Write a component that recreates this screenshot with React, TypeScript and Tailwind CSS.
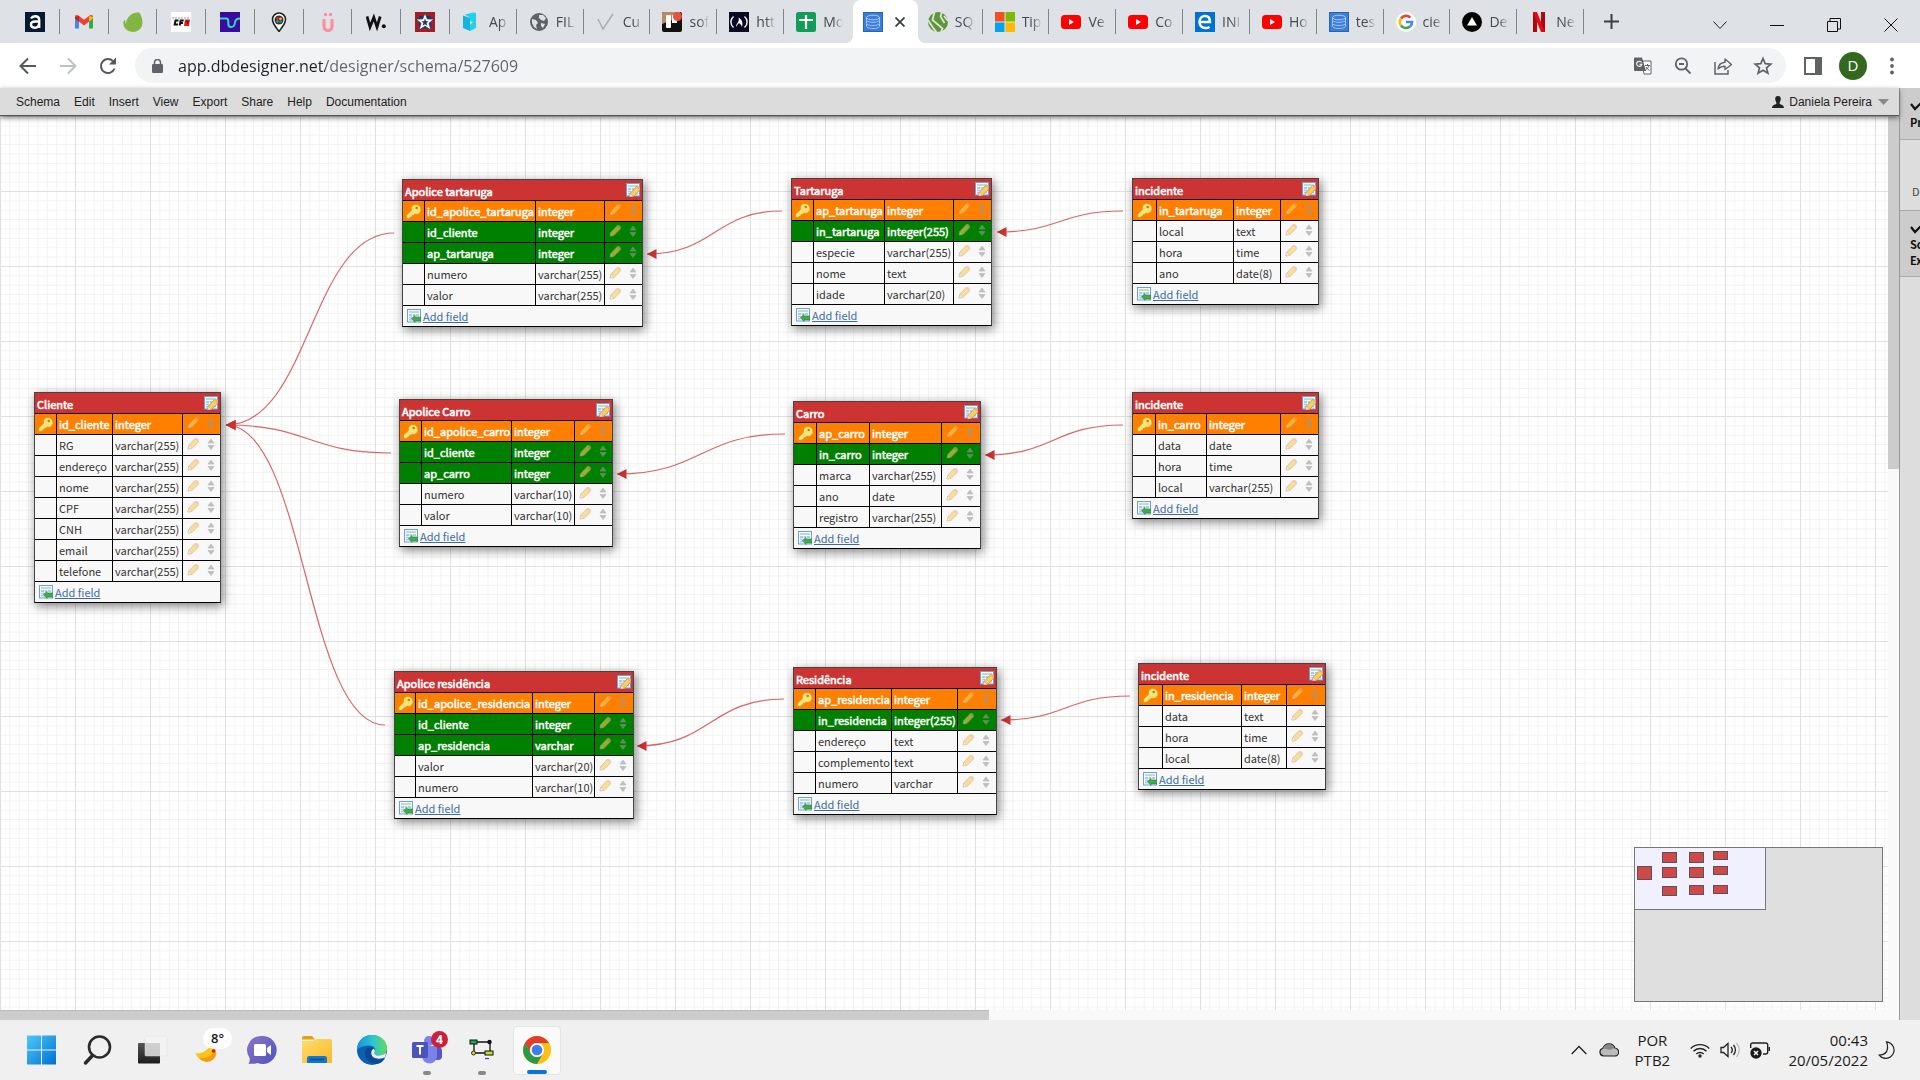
import React, { type ReactNode } from "react";

const uiFont = "font-['Open_Sans',sans-serif]";
const sheetFont = "font-['Noto_Sans_CJK_SC',sans-serif]";

/* ---------- Browser tabs ---------- */

const Fav = ({ children }: { children: ReactNode }) => (
  <svg viewBox="0 0 20 20" className="size-5 shrink-0" aria-hidden="true">
    {children}
  </svg>
);

const YouTube = () => (
  <Fav>
    <rect y="3" width="20" height="14" rx="3.5" fill="#f00" />
    <path d="M8 7v6l5-3z" fill="#fff" />
  </Fav>
);

const DbIcon = () => (
  <Fav>
    <rect x="0.5" y="0.5" width="19" height="19" fill="#3b7ddb" stroke="#2a62b0" />
    <g fill="none" stroke="#a9cbf7" strokeWidth="1">
      <ellipse cx="10" cy="5.5" rx="6.5" ry="2.3" />
      <path d="M3.5 5.5v2.5c0 1.300 3 2.300 6.500 2.300s6.500-1 6.500-2.300V5.500M3.500 9v2.200c0 1.300 3 2.300 6.500 2.300s6.500-1 6.500-2.300V9M3.500 12v2.200c0 1.300 3 2.300 6.500 2.300s6.500-1 6.500-2.300V12" />
    </g>
  </Fav>
);

const smallTabs: { name: string; icon: ReactNode }[] = [
  {
    name: "Alura",
    icon: (
      <Fav>
        <rect width="20" height="20" fill="#051933" />
        <path d="M6 6.500c1-1.700 2.300-2.200 4-2.200 2.700 0 4.200 1.300 4.200 3.900V16M14 9.500h-4c-2.600 0-4 1-4 3s1.300 3.200 3.500 3.200c2.400 0 4.500-1.300 4.500-4" fill="none" stroke="#fff" strokeWidth="2.400" />
      </Fav>
    ),
  },
  {
    name: "Gmail",
    icon: (
      <Fav>
        <path d="M1 4.500v12h4V8z" fill="#4285f4" />
        <path d="M19 4.500v12h-4V8z" fill="#34a853" />
        <path d="M1 5c0-2 2-2.500 3.500-1.400L10 7.800l5.500-4.200C17 2.500 19 3 19 5v1.500l-9 7-9-7z" fill="#ea4335" />
        <path d="M1 5v1.500l4 3.200V4z" fill="#c5221f" />
        <path d="M19 5v1.500l-4 3.200V4z" fill="#fbbc04" />
      </Fav>
    ),
  },
  {
    name: "Envato",
    icon: (
      <Fav>
        <path d="M16 .5c1.500 1 4.500 8 3 13-1.300 4.500-6 7-10.500 6.300C3 19 0 15 .4 10.500.6 9 1.500 7.500 2 8c.4 1 .2 2.500 1 4C3.500 5 9-.5 16 .500z" fill="#82b541" />
      </Fav>
    ),
  },
  {
    name: "CFB",
    icon: (
      <Fav>
        <rect width="20" height="20" fill="#fff" />
        <path d="M1 6h18" stroke="#999" strokeWidth="1" strokeDasharray="2 1" />
        <path d="M7.500 8.500H4.500L3.700 12.500H7M8.700 13.500l1-5h3M9.500 11h2.500" fill="none" stroke="#111" strokeWidth="2" />
        <path d="M14 7.500h5l-1 6.500h-5z" fill="#e01a1a" />
        <path d="M15.500 9.500h1.500l-.5 2.500" fill="none" stroke="#300" strokeWidth=".8" />
      </Fav>
    ),
  },
  {
    name: "Wave",
    icon: (
      <Fav>
        <rect width="20" height="20" fill="#3b0a9e" />
        <path d="M0 6.500h6.500q1.800 0 1.800 2.500v2.500q0 3.500 2.700 3.500 3.500 0 4-4.500.5-4 5-4" fill="none" stroke="#2fd8c5" strokeWidth="2" />
      </Fav>
    ),
  },
  {
    name: "Mapa",
    icon: (
      <Fav>
        <path d="M10 19.500C7 15 3.500 12 3.500 7.500a6.500 6.500 0 0 1 13 0C16.500 12 13 15 10 19.500z" fill="#fff" stroke="#222" strokeWidth="1.600" />
        <circle cx="10" cy="8" r="4.500" fill="#333" />
        <circle cx="8.500" cy="6.500" r="1.400" fill="#e23" />
        <circle cx="11.500" cy="6.800" r="1.400" fill="#fb0" />
        <circle cx="8.500" cy="9.500" r="1.400" fill="#2a5" />
        <circle cx="11.500" cy="9.700" r="1.400" fill="#27e" />
      </Fav>
    ),
  },
  {
    name: "U",
    icon: (
      <Fav>
        <path d="M6 7v7.500a4 4 0 0 0 8 0V7" fill="none" stroke="#ff8c9d" strokeWidth="3" />
        <circle cx="7.500" cy="2.500" r="1.700" fill="#ff8c9d" />
        <circle cx="12.500" cy="2.500" r="1.700" fill="#ff8c9d" />
      </Fav>
    ),
  },
  {
    name: "W",
    icon: (
      <Fav>
        <path d="M1 4.500l3 10.500 3.800-9.500L11 15l3.200-10.500" fill="none" stroke="#111" strokeWidth="2.800" />
        <circle cx="17.800" cy="14.300" r="2" fill="#111" />
      </Fav>
    ),
  },
  {
    name: "Estrela",
    icon: (
      <Fav>
        <rect width="20" height="20" fill="#a31d23" />
        <path d="M4 4h12v12H4z" fill="#1d3768" />
        <path d="M10 1l2.400 6H19l-5 4.300L16 18l-6-3.700L4 18l2-6.700L1 7h6.600z" fill="#fff" stroke="#1d3768" strokeWidth=".8" />
        <path d="M10 6.500l1 2.700h2.600l-2 1.800.8 2.700-2.400-1.500-2.400 1.500.8-2.700-2-1.800H9z" fill="#1d3768" />
      </Fav>
    ),
  },
];

const wideTabs: { title: string; icon: ReactNode; active?: boolean }[] = [
  {
    title: "Ap",
    icon: (
      <Fav>
        <path d="M1 3.500L8 6v13l-7-3z" fill="#12b5dd" />
        <path d="M3 2.500L11 .5 14 1v15l-6 3V6z" fill="#1fd0f2" />
        <path d="M8 9l3 1-3 3z" fill="#ffe14d" />
      </Fav>
    ),
  },
  {
    title: "FIL",
    icon: (
      <Fav>
        <circle cx="10" cy="10" r="9" fill="#5f6368" />
        <path d="M3 7l4 1 2 3-2 2 1 4-3-2-2-4zM10 3l4 0 3 3-2 3-3-1-2-2zM12 11l4 1-2 4-2-2z" fill="#dee1e6" />
      </Fav>
    ),
  },
  {
    title: "Cu",
    icon: (
      <Fav>
        <path d="M2 7l5 10L17 2" fill="none" stroke="#a9adb1" strokeWidth="1.500" />
      </Fav>
    ),
  },
  {
    title: "sof",
    icon: (
      <Fav>
        <rect width="20" height="20" rx="2" fill="#111" />
        <path d="M0 2a2 2 0 0 1 2-2h16v5L0 12z" fill="#b98a63" />
        <rect x="4" y="3" width="5" height="13" rx="1" fill="#fff" />
        <path d="M10 3h5v8h-5z" fill="#fff" />
        <circle cx="15.500" cy="4.500" r="4.500" fill="#e8503f" />
      </Fav>
    ),
  },
  {
    title: "htt",
    icon: (
      <Fav>
        <rect width="20" height="20" fill="#0a0a23" />
        <path d="M4.500 4.500c-3.500 3-3.500 8 0 11M15.500 4.500c3.500 3 3.500 8 0 11" fill="none" stroke="#fff" strokeWidth="1.400" />
        <path d="M7 15c0-4 4-5 2.500-9.500C13.500 8 14 11 13 15c-1-3-2-3-3-4-1 1-2 2-3 4z" fill="#fff" />
      </Fav>
    ),
  },
  {
    title: "Mo",
    icon: (
      <Fav>
        <rect width="20" height="20" rx="2.500" fill="#0f9d58" />
        <path d="M10 3v14M3 8h14" stroke="#fff" strokeWidth="2.200" />
      </Fav>
    ),
  },
  { title: "", icon: <DbIcon />, active: true },
  {
    title: "SQ",
    icon: (
      <Fav>
        <circle cx="10" cy="10" r="10" fill="#5e9732" />
        <path d="M6.500 0L4.500 8l10 8.500L13 20M14 0l-1.500 4.500 4 6.500M0 8l4.500 7 4 5M20 9l-4-5" fill="none" stroke="#dee1e6" strokeWidth="1.800" />
      </Fav>
    ),
  },
  {
    title: "Tip",
    icon: (
      <Fav>
        <path d="M0 0h9.500v9.500H0z" fill="#f25022" />
        <path d="M10.500 0H20v9.500h-9.500z" fill="#7fba00" />
        <path d="M0 10.500h9.500V20H0z" fill="#00a4ef" />
        <path d="M10.500 10.500H20V20h-9.500z" fill="#ffb900" />
      </Fav>
    ),
  },
  { title: "Ve", icon: <YouTube /> },
  { title: "Co", icon: <YouTube /> },
  {
    title: "INI",
    icon: (
      <Fav>
        <rect width="20" height="20" fill="#0072d6" />
        <path d="M4.500 10H15c0-4-2-6-5-6s-5.500 2.500-5.500 6 2.300 6 6 6c1.600 0 3-.4 4-1.100" fill="none" stroke="#fff" strokeWidth="2.500" />
      </Fav>
    ),
  },
  { title: "Ho", icon: <YouTube /> },
  { title: "tes", icon: <DbIcon /> },
  {
    title: "cie",
    icon: (
      <Fav>
        <circle cx="10" cy="10" r="10" fill="#fff" />
        <g fill="none" strokeWidth="2.600">
          <path d="M5 6.400A6.100 6.100 0 0 1 14.300 5.700" stroke="#ea4335" />
          <path d="M5 13.500a6.100 6.100 0 0 1 0-7" stroke="#fbbc05" />
          <path d="M14 14.600a6.100 6.100 0 0 1-9-1.200" stroke="#34a853" />
          <path d="M10 10h6.100c0 2-.8 3.600-2.100 4.600" stroke="#4285f4" />
        </g>
      </Fav>
    ),
  },
  {
    title: "De",
    icon: (
      <Fav>
        <circle cx="10" cy="10" r="10" fill="#000" />
        <path d="M10 5l5 8.500H5z" fill="#fff" />
      </Fav>
    ),
  },
  {
    title: "Ne",
    icon: (
      <Fav>
        <path d="M4 0h4v20l-4 .500zM12 0h4v20.500l-4-.5z" fill="#b1060f" />
        <path d="M4 0h4l8 20.500-4-.5z" fill="#e50914" />
      </Fav>
    ),
  },
];

const iconBtn = "flex shrink-0 items-center justify-center text-[#5f6368]";

const TabStrip = () => (
  <div className={`flex h-[43px] items-end bg-[#dee1e6] pl-[11px] text-[14px] text-[#45494d] ${uiFont}`}>
    <div className="flex h-full w-[439px]">
      {smallTabs.map((t) => (
        <button key={t.name} aria-label={t.name} className="flex flex-1 items-center pl-[14px]">
          {t.icon}
          <span className="ml-auto h-[25px] w-px bg-[#80868b]" />
        </button>
      ))}
    </div>
    <div className="flex h-full w-[1134px]">
      {wideTabs.map((t, i) =>
        t.active ? (
          <div key={i} className="relative ml-[2px] flex flex-1 items-center rounded-t-lg bg-white pl-[10px]">
            <span className="absolute bottom-0 -left-2 size-2 bg-[radial-gradient(circle_at_0_0,transparent_8px,white_8px)]" />
            <span className="absolute -right-2 bottom-0 size-2 bg-[radial-gradient(circle_at_100%_0,transparent_8px,white_8px)]" />
            <button aria-label="DB Designer">{t.icon}</button>
            <button aria-label="Fechar aba" className="ml-3">
              <svg viewBox="0 0 10 10" className="size-[10px]">
                <path d="M.5.5l9 9M9.500.5l-9 9" stroke="#3c4043" strokeWidth="1.800" />
              </svg>
            </button>
          </div>
        ) : (
          <button key={i} className={`flex flex-1 items-center ${i === 7 ? "pl-[10px]" : "pl-[12px]"}`}>
            {t.icon}
            <span className="ml-[7px] w-5 overflow-hidden text-left leading-5 whitespace-nowrap [mask-image:linear-gradient(90deg,black_50%,transparent)]">
              {t.title}
            </span>
            <span className={`ml-auto h-[25px] w-px ${i === 5 ? "bg-transparent" : "bg-[#80868b]"}`} />
          </button>
        ),
      )}
    </div>
    <button aria-label="Nova aba" className="ml-5 flex h-full items-center">
      <svg viewBox="0 0 15 15" className="size-[15px]">
        <path d="M7.500 0v15M0 7.500h15" stroke="#3c4043" strokeWidth="2" />
      </svg>
    </button>
    <div className="ml-auto flex h-[36px] items-center gap-[43px] pr-[22px]">
      <button aria-label="Pesquisar abas">
        <svg viewBox="0 0 14 14" className="size-[14px]"><path d="M.5 3.500L7 10.500l6.500-7" fill="none" stroke="#222" /></svg>
      </button>
      <button aria-label="Minimizar">
        <svg viewBox="0 0 14 14" className="size-[14px]"><path d="M0 7.500h14" stroke="#111" /></svg>
      </button>
      <button aria-label="Restaurar">
        <svg viewBox="0 0 14 14" className="size-[14px]">
          <path d="M.5 3.500h10v10H.5zM3 3.500V.500h10.500v10.500H10.500" fill="none" stroke="#111" />
        </svg>
      </button>
      <button aria-label="Fechar">
        <svg viewBox="0 0 14 14" className="size-[14px]"><path d="M.5.500l13 13M13.500.500l-13 13" stroke="#111" /></svg>
      </button>
    </div>
  </div>
);

const AddressBar = () => (
  <div className={`flex h-[45px] items-center bg-white pr-[20px] pl-[18px] ${uiFont}`}>
    <button aria-label="Voltar" className={`${iconBtn} size-5`}>
      <svg viewBox="0 0 20 20" className="size-5"><path d="M18 10H3M10 2.500L2.500 10l7.500 7.500" fill="none" stroke="#55595d" strokeWidth="2" /></svg>
    </button>
    <button aria-label="Avançar" className={`${iconBtn} ml-5 size-5`}>
      <svg viewBox="0 0 20 20" className="size-5"><path d="M2 10h15M10 2.500l7.500 7.500-7.500 7.500" fill="none" stroke="#bdc1c6" strokeWidth="2" /></svg>
    </button>
    <button aria-label="Recarregar" className={`${iconBtn} ml-5 size-5`}>
      <svg viewBox="0 0 20 20" className="size-5">
        <path d="M16.500 12.500A7 7 0 1 1 15 5.200" fill="none" stroke="#55595d" strokeWidth="2" />
        <path d="M18 1.500v7h-7z" fill="#55595d" />
      </svg>
    </button>
    <form className="ml-[17px] flex h-[35px] flex-1 items-center rounded-full bg-[#f1f3f4] pr-[13px] pl-[17px]" onSubmit={(e) => e.preventDefault()}>
      <svg viewBox="0 0 11 14" className="h-[14px] w-[11px] shrink-0" aria-hidden="true">
        <rect y="5" width="11" height="9" rx="1.200" fill="#5f6368" />
        <path d="M2.500 6V3.500a3 3 0 0 1 6 0V6" fill="none" stroke="#5f6368" strokeWidth="1.500" />
      </svg>
      <input
        aria-label="Barra de endereço"
        defaultValue="app.dbdesigner.net/designer/schema/527609"
        className="ml-[15px] h-[30px] min-w-0 flex-1 bg-[linear-gradient(90deg,#202124_147px,#5f6368_147px)] bg-clip-text text-[16px] text-[#202124] outline-none [-webkit-text-fill-color:transparent]"
      />
      <div className="flex items-center gap-5">
        <button aria-label="Traduzir" type="button" className={iconBtn}>
          <svg viewBox="0 0 20 20" className="size-5">
            <path d="M9 5h9v13h-7z" fill="#fff" stroke="#5f6368" />
            <path d="M2 1.500h7l4 13.500H2a1 1 0 0 1-1-1V2.500a1 1 0 0 1 1-1z" fill="#5f6368" />
            <path d="M8.500 6.500A2.600 2.600 0 1 0 8.800 8.300H6.500" fill="none" stroke="#fff" strokeWidth="1.100" />
            <path d="M12 9.500h5M14.500 8v1.500M16 9.500c-.5 2-2 3.500-3.500 4.500M13 11c.7 1.500 2 2.800 3.500 3.500" fill="none" stroke="#5f6368" />
          </svg>
        </button>
        <button aria-label="Zoom" type="button" className={iconBtn}>
          <svg viewBox="0 0 20 20" className="size-5">
            <circle cx="8.500" cy="8" r="5.700" fill="none" stroke="#5f6368" strokeWidth="1.800" />
            <path d="M12.500 12.500l5 5M6 8h5" stroke="#5f6368" strokeWidth="1.800" />
          </svg>
        </button>
        <button aria-label="Compartilhar" type="button" className={iconBtn}>
          <svg viewBox="0 0 20 20" className="size-5">
            <path d="M2 6v12h13v-4" fill="none" stroke="#5f6368" strokeWidth="1.500" />
            <path d="M5 13c.5-4 3-6.500 7-6.800V3l6.500 5.500L12 13.500v-3.200c-3 0-5 .7-7 2.700z" fill="none" stroke="#5f6368" strokeWidth="1.400" strokeLinejoin="round" />
          </svg>
        </button>
        <button aria-label="Favoritos" type="button" className={iconBtn}>
          <svg viewBox="0 0 20 20" className="size-5">
            <path d="M10 2.500l2.200 5.200 5.600.4-4.300 3.700 1.400 5.500L10 14.300l-4.900 3 1.400-5.500L2.200 8.100l5.600-.4z" fill="none" stroke="#5f6368" strokeWidth="1.700" />
          </svg>
        </button>
      </div>
    </form>
    <button aria-label="Painel lateral" className={`${iconBtn} ml-[18px]`}>
      <svg viewBox="0 0 18 18" className="size-[18px]">
        <rect x="1" y="1" width="16" height="16" fill="#fff" stroke="#5f6368" strokeWidth="2" />
        <path d="M11 1h6v16h-6z" fill="#5f6368" />
      </svg>
    </button>
    <button aria-label="Perfil" className="ml-[17px] flex size-7 items-center justify-center rounded-full bg-[#33691e] text-[15px] leading-none text-white">
      D
    </button>
    <button aria-label="Menu" className={`${iconBtn} ml-[17px] w-4`}>
      <svg viewBox="0 0 4 18" className="h-[18px] w-1"><g fill="#5f6368"><circle cx="2" cy="2.500" r="1.900" /><circle cx="2" cy="9" r="1.900" /><circle cx="2" cy="15.500" r="1.900" /></g></svg>
    </button>
  </div>
);

const menu = ["Schema", "Edit", "Insert", "View", "Export", "Share", "Help", "Documentation"];

const MenuBar = () => (
  <nav className="relative z-20 flex h-7 items-center border-b border-[#555] bg-[#dcdcdc] pr-2.5 pl-4 font-['Liberation_Sans',sans-serif] text-[12px] text-[#222] shadow-[0_2px_5px_rgba(0,0,0,0.5)]">
    <div className="flex gap-[14px]">
      {menu.map((m) => (
        <button key={m}>{m}</button>
      ))}
    </div>
    <button className="ml-auto flex items-center">
      <svg viewBox="0 0 12 12" className="mr-[5px] size-3" aria-hidden="true">
        <path d="M6 0c2 0 2.800 1.300 2.800 3S7.500 6.300 7.500 7.500c0 1 4.500 1 4.500 4.500H0c0-3.500 4.500-3.500 4.500-4.500C4.500 6.300 3.200 4.700 3.200 3S4 0 6 0z" fill="#222" />
      </svg>
      Daniela Pereira
      <svg viewBox="0 0 11 6" className="ml-[6px] h-[6px] w-[11px]" aria-hidden="true"><path d="M0 0h11L5.500 6z" fill="#888" /></svg>
    </button>
  </nav>
);

/* ---------- Schema tables ---------- */

type Field = [name: string, type: string];
type Entity = {
  title: string;
  x: number;
  y: number;
  cols: [number, number, number, number];
  keys: number;
  fields: Field[];
};

const entities: Entity[] = [
  {
    title: "Cliente", x: 34, y: 276, cols: [21, 56, 70, 38], keys: 0,
    fields: [["id_cliente", "integer"], ["RG", "varchar(255)"], ["endereço", "varchar(255)"], ["nome", "varchar(255)"], ["CPF", "varchar(255)"], ["CNH", "varchar(255)"], ["email", "varchar(255)"], ["telefone", "varchar(255)"]],
  },
  {
    title: "Apolice tartaruga", x: 402, y: 63, cols: [21, 111, 69, 38], keys: 2,
    fields: [["id_apolice_tartaruga", "integer"], ["id_cliente", "integer"], ["ap_tartaruga", "integer"], ["numero", "varchar(255)"], ["valor", "varchar(255)"]],
  },
  {
    title: "Tartaruga", x: 791, y: 62, cols: [21, 71, 69, 38], keys: 1,
    fields: [["ap_tartaruga", "integer"], ["in_tartaruga", "integer(255)"], ["especie", "varchar(255)"], ["nome", "text"], ["idade", "varchar(20)"]],
  },
  {
    title: "incidente", x: 1132, y: 62, cols: [23, 77, 47, 38], keys: 0,
    fields: [["in_tartaruga", "integer"], ["local", "text"], ["hora", "time"], ["ano", "date(8)"]],
  },
  {
    title: "Apolice Carro", x: 399, y: 283, cols: [21, 90, 63, 38], keys: 2,
    fields: [["id_apolice_carro", "integer"], ["id_cliente", "integer"], ["ap_carro", "integer"], ["numero", "varchar(10)"], ["valor", "varchar(10)"]],
  },
  {
    title: "Carro", x: 793, y: 285, cols: [22, 53, 72, 39], keys: 1,
    fields: [["ap_carro", "integer"], ["in_carro", "integer"], ["marca", "varchar(255)"], ["ano", "date"], ["registro", "varchar(255)"]],
  },
  {
    title: "incidente", x: 1132, y: 276, cols: [22, 51, 74, 38], keys: 0,
    fields: [["in_carro", "integer"], ["data", "date"], ["hora", "time"], ["local", "varchar(255)"]],
  },
  {
    title: "Apolice residência", x: 394, y: 555, cols: [20, 117, 62, 39], keys: 2,
    fields: [["id_apolice_residencia", "integer"], ["id_cliente", "integer"], ["ap_residencia", "varchar"], ["valor", "varchar(20)"], ["numero", "varchar(10)"]],
  },
  {
    title: "Residência", x: 793, y: 551, cols: [21, 76, 66, 39], keys: 1,
    fields: [["ap_residencia", "integer"], ["in_residencia", "integer(255)"], ["endereço", "text"], ["complemento", "text"], ["numero", "varchar"]],
  },
  {
    title: "incidente", x: 1138, y: 547, cols: [23, 79, 45, 39], keys: 0,
    fields: [["in_residencia", "integer"], ["data", "text"], ["hora", "time"], ["local", "date(8)"]],
  },
];

const Pencil = () => (
  <>
    <path d="M1 12l.8-3.800L8.200 1.400l3.400 3.400L5 11.400z" fill="#f7cf5e" stroke="#c0873a" strokeWidth=".7" />
    <path d="M1 12l.8-3.800 3.200 3.200z" fill="#f6e3cd" stroke="#a98a6c" strokeWidth=".4" />
    <path d="M8.200 1.400c1.700-1.500 4.900 1.700 3.400 3.400z" fill="#eba99c" />
  </>
);

const SheetIcon = ({ children }: { children: ReactNode }) => (
  <svg viewBox="0 0 14 14" className="size-[14px] shrink-0" aria-hidden="true">
    <rect x=".5" y=".5" width="13" height="12.500" fill="#f4f9ff" stroke="#6f9fd6" />
    <path d="M2 3h10" stroke="#86c08a" strokeWidth="1" />
    <path d="M2 5h10v6.500H2z" fill="#a9caee" />
    <path d="M2 7.500h10M2 9.500h10M5.500 5v6.500M8.500 5v6.500" stroke="#fff" strokeWidth=".6" />
    {children}
  </svg>
);

const KeyIcon = () => (
  <svg viewBox="0 0 14 14" className="mx-auto size-[15px]" aria-hidden="true">
    <path d="M8.800.5a4.700 4.700 0 0 1 4 7.800c-1.200 1.300-3 1.600-4.500 1.100L7.300 10.400l-1.500.2-.2 1.400-1.500.2-.3 1.200H.5v-2.900l4.700-4.600C4.500 3.200 6 .7 8.800.5z" fill="#fbe37a" stroke="#c99a1c" strokeWidth=".7" />
    <circle cx="10" cy="3.800" r="1.200" fill="#b98312" />
  </svg>
);

const EntityCard = ({ e }: { e: Entity }) => (
  <section
    className="absolute border border-[#444] border-b-black bg-[#f8f8f8] text-[11px] leading-[20px] text-[#333] shadow-[2px_3px_10px_rgba(0,0,0,0.5)]"
    style={{ left: e.x, top: e.y }}
  >
    <header className="flex h-5 items-center justify-between bg-[#cc3333] pr-[2px] pl-[2px] text-white">
      <h2 className="pt-px [-webkit-text-stroke:0.6px_white]">{e.title}</h2>
      <button aria-label="Editar tabela">
        <SheetIcon>
          <g transform="translate(2.500 2)"><Pencil /></g>
        </SheetIcon>
      </button>
    </header>
    <table className="table-fixed border-separate border-spacing-0" style={{ width: e.cols.reduce((a, b) => a + b, 0) }}>
      <colgroup>
        {e.cols.map((w, i) => (
          <col key={i} style={{ width: w }} />
        ))}
      </colgroup>
      <tbody>
        {e.fields.map(([name, type], i) => {
          const tone =
            i === 0
              ? "bg-[#ff8000] text-white [-webkit-text-stroke:0.5px_white]"
              : i <= e.keys
                ? "bg-[#008000] text-white [-webkit-text-stroke:0.5px_white]"
                : "";
          return (
            <tr key={i} className={tone}>
              <td className="h-[21px] border-t border-black p-0">{i === 0 && <KeyIcon />}</td>
              <td className="border-t border-l border-black p-0 pl-[2px] whitespace-nowrap">{name}</td>
              <td className="border-t border-l border-black p-0 pl-[2px] whitespace-nowrap">{type}</td>
              <td className="border-t border-l border-black p-0">
                <div className="flex h-5 items-start gap-[7px] pt-[2px] pl-[4px] opacity-60">
                  <button aria-label={`Editar ${name}`}>
                    <svg viewBox="0 0 13 13" className="size-[13px]"><Pencil /></svg>
                  </button>
                  <button aria-label={`Mover ${name}`}>
                    <svg viewBox="0 0 8 12" className="mt-px h-3 w-2"><path d="M1 5l3-4 3 4zM1 7.500h6l-3 4z" fill="#999" stroke="#999" strokeLinejoin="round" strokeWidth=".8" /></svg>
                  </button>
                </div>
              </td>
            </tr>
          );
        })}
      </tbody>
    </table>
    <footer className="flex h-[21px] items-center border-t border-black pl-[4px]">
      <SheetIcon>
        <path d="M4.500 9.500l3.500-3v1.500h6v4H8v1.500z" fill="#3fae49" stroke="#237a2b" strokeWidth=".5" />
      </SheetIcon>
      <a href="#add-field" className="ml-[2px] text-[#3a6ea5] underline">Add field</a>
    </footer>
  </section>
);

/* Each link runs from the arrow tip (x1, y1) to the referencing table (x2, y2). */
const links: [number, number, number, number][] = [
  [226, 309, 394, 117],
  [226, 309, 391, 337],
  [226, 309, 385, 609],
  [647, 138, 782, 95],
  [997, 116, 1123, 95],
  [617, 358, 785, 318],
  [985, 339, 1123, 309],
  [637, 630, 784, 583],
  [1001, 604, 1130, 580],
];

const miniBoxes: [number, number, number, number][] = [
  [2, 18, 15, 14],
  [27, 4, 15, 11], [54, 4, 15, 11], [78, 3, 15, 9],
  [27, 19, 15, 11], [54, 19, 15, 11], [78, 18, 15, 9],
  [27, 38, 15, 10], [54, 37, 15, 10], [78, 37, 15, 9],
];

const Canvas = () => (
  <main className="relative min-w-0 flex-1 overflow-hidden bg-white bg-[linear-gradient(90deg,#e0e0e0_1px,transparent_1px),linear-gradient(#e0e0e0_1px,transparent_1px),linear-gradient(90deg,#f2f2f2_1px,transparent_1px),linear-gradient(#f2f2f2_1px,transparent_1px)] bg-[length:75px_75px,75px_75px,9.375px_9.375px,9.375px_9.375px]">
    <svg className="absolute inset-0 size-full" aria-hidden="true">
      {links.map(([x1, y1, x2, y2], i) => {
        const m = (x1 + x2) / 2;
        return (
          <g key={i}>
            <path d={`M${x1} ${y1}C${m} ${y1} ${m} ${y2} ${x2} ${y2}`} fill="none" stroke="#cc3333" strokeOpacity=".75" strokeWidth="1.200" />
            <path d={`M${x1} ${y1}l9.500 -5v10z`} fill="#cc3333" />
          </g>
        );
      })}
    </svg>
    {entities.map((e, i) => (
      <EntityCard key={i} e={e} />
    ))}
    <div className="absolute right-[5px] bottom-[8px] h-[155px] w-[249px] border border-[#777] bg-[#ddd]/95">
      <div className="absolute -top-px -left-px h-[63px] w-[132px] border border-[#777] bg-[#f0f0ff]">
        {miniBoxes.map(([left, top, width, height], i) => (
          <span key={i} className="absolute border border-[#555] bg-[#d14848]" style={{ left, top, width, height }} />
        ))}
      </div>
    </div>
  </main>
);

const Check = () => (
  <svg viewBox="0 0 12 10" className="h-[10px] w-3" aria-hidden="true"><path d="M1 2l4 5 6-6" fill="none" stroke="#111" strokeWidth="2.200" /></svg>
);

const SidePanel = () => (
  <aside className={`w-[21px] shrink-0 overflow-hidden border-l border-[#999] bg-[#ddd] text-[11px] leading-[16px] text-[#111] ${sheetFont}`}>
    <button className="flex h-[52px] w-full flex-col items-start overflow-hidden border-b border-[#aaa] bg-[#ccc] pt-[14px] pl-[10px] text-left font-bold">
      <Check />
      <span className="mt-[2px]">Pr</span>
    </button>
    <div className="flex h-[71px] items-end border-b border-[#aaa] pb-[11px] pl-[12px] text-[#444]">D</div>
    <button className="flex h-[66px] w-full flex-col items-start overflow-hidden border-b border-[#aaa] bg-[#ccc] pt-[14px] pl-[10px] text-left font-bold">
      <Check />
      <span className="mt-px">Sc</span>
      <span>Ex</span>
    </button>
  </aside>
);

/* ---------- Taskbar ---------- */

const Task = ({ label, mark, children }: { label: string; mark?: "idle"; children: ReactNode }) => (
  <button aria-label={label} className="relative flex h-[50px] w-[55px] items-center justify-center">
    <svg viewBox="0 0 40 34" className="h-[34px] w-10">{children}</svg>
    {mark && <span className="absolute bottom-0 h-1 w-2 rounded-full bg-[#888]" />}
  </button>
);

const Taskbar = () => (
  <footer className={`flex h-[60px] shrink-0 items-center bg-[#f0f0f0] pr-6 pl-[14px] text-[#1b1b1b] ${uiFont}`}>
    <Task label="Iniciar">
      <defs>
        <linearGradient id="win" x1="0" y1="0" x2="1" y2="1"><stop stopColor="#4cc9fb" /><stop offset="1" stopColor="#0070d0" /></linearGradient>
        <linearGradient id="dk" x1="0" y1="0" x2="0" y2="1"><stop stopColor="#555" /><stop offset="1" stopColor="#1c1c1c" /></linearGradient>
        <linearGradient id="fold" x1="0" y1="0" x2="1" y2="1"><stop stopColor="#ffdc6b" /><stop offset="1" stopColor="#fbb92a" /></linearGradient>
        <linearGradient id="edge" x1="0" y1="0" x2="1" y2="0"><stop stopColor="#1b8fdc" /><stop offset=".5" stopColor="#2cc3d6" /><stop offset="1" stopColor="#62dc5a" /></linearGradient>
        <linearGradient id="chat" x1="0" y1="0" x2="1" y2="1"><stop stopColor="#8f74c8" /><stop offset="1" stopColor="#4b53bc" /></linearGradient>
      </defs>
      <path d="M5 2.500h14v14H5zM20 2.500h14v14H20zM5 17.500h14v14H5zM20 17.500h14v14H20z" fill="url(#win)" />
    </Task>
    <Task label="Pesquisar">
      <circle cx="22.500" cy="14" r="10.500" fill="none" stroke="#2b2b2b" strokeWidth="2.600" />
      <path d="M15.500 22.500L8.500 30" stroke="#2b2b2b" strokeWidth="3.500" strokeLinecap="round" />
    </Task>
    <Task label="Visão de tarefas">
      <rect x="6" y="10" width="22" height="20.500" rx="1" fill="url(#dk)" />
      <rect x="13" y="3" width="22" height="20" rx="1" fill="#f4f4f4" fillOpacity=".78" stroke="#ddd" strokeWidth=".5" />
    </Task>
    <button aria-label="Clima 8°" className="relative flex h-[50px] w-[55px] items-center justify-center">
      <svg viewBox="0 0 40 34" className="h-[34px] w-10">
        <path d="M8.500 20c5 1.500 12-2 15.500-8 6 3.500 7 10 3 13.500-6 5-15.500 3-18.500-5.500z" fill="#f9c516" />
        <path d="M12 24.500c6 2 13-1 16.500-8 1 8-2 10.500-6 12-4 1.200-8.500-.5-10.500-4z" fill="#f29a13" />
        <circle cx="26.500" cy="18" r="1.800" fill="#e0123a" />
      </svg>
      <span className="absolute top-[3px] right-[2px] flex h-[21px] w-[29px] items-center justify-center rounded-full bg-white/90 text-[13px] font-semibold">8°</span>
    </button>
    <Task label="Bate-papo">
      <path d="M20 3a14 14 0 1 1-4.500 27c-3 1-6 1-9 .7 1.300-2 1.500-3.800 1-6A14 14 0 0 1 20 3z" fill="url(#chat)" />
      <rect x="12" y="11" width="12" height="12" rx="1.500" fill="#fff" />
      <path d="M25 15l4-3v10l-4-3z" fill="#fff" />
    </Task>
    <Task label="Explorador de arquivos">
      <path d="M5 5a2 2 0 0 1 2-2h8l3 3.500h-13z" fill="#e2a113" />
      <path d="M5 8h11l3-2h14a2 2 0 0 1 2 2v22H5z" fill="url(#fold)" />
      <path d="M10 30v-4.500a2.500 2.500 0 0 1 2.500-2.500h15a2.500 2.500 0 0 1 2.500 2.500V30z" fill="#1177cf" />
      <path d="M13 26.500h14" stroke="#0b4d8c" strokeWidth="1.500" />
    </Task>
    <Task label="Edge">
      <circle cx="20" cy="17" r="15" fill="#0f5fb0" />
      <path d="M5 17C5 8 11 2 20 2c9 0 15 6 15 13 0 5-4 7.500-8.500 7.500-4 0-5-2-3.500-4 1-2-.5-6-6-6S6 15 5 17z" fill="url(#edge)" />
      <path d="M13.500 17c-2 6 2 13 10 14 4 .3 7-2 10-6-5 3-13 2-14-4-.5-3 1-5 2-5.500-3-2-7-.5-8 1.500z" fill="#0a4a93" />
      <path d="M23 18.500c-1.500 2-.5 4 3.500 4 3 0 6-1 7.600-3l-.8 4.500c-5 3-13.500 2-14-3.500-.2-2 .8-4 2.200-4.700.9.700 1.500 2 1.500 2.700z" fill="#f0f0f0" />
    </Task>
    <div className="relative">
      <Task label="Teams" mark="idle">
        <circle cx="22" cy="8" r="5" fill="#7b83eb" />
        <rect x="24" y="14" width="11" height="13" rx="4" fill="#5059c9" />
        <path d="M15 13h15v10a7.500 7.500 0 0 1-15 0z" fill="#7b83eb" />
        <rect x="5" y="9" width="16" height="16" rx="1.500" fill="#4b53bc" />
        <path d="M9.500 13h7M13 13v8.500" stroke="#fff" strokeWidth="2" />
      </Task>
      <span className="absolute top-[6px] right-[6px] flex size-[17px] items-center justify-center rounded-full bg-[#cb1f3b] text-[12px] leading-none font-bold text-white">4</span>
    </div>
    <Task label="Diagrama" mark="idle">
      <path d="M15 9h13v9M12 11v9h14" fill="none" stroke="#111" strokeWidth="1.300" />
      <rect x="8" y="7" width="7" height="4" fill="#1faa4b" stroke="#111" />
      <circle cx="27.500" cy="9" r="2.200" fill="#111" />
      <circle cx="11.500" cy="20" r="2" fill="#c6e11c" stroke="#111" strokeWidth=".8" />
      <rect x="23" y="18" width="8" height="4" fill="#c6e11c" stroke="#111" />
      <path d="M23 25.500h4" stroke="#33f" strokeWidth="1.200" />
    </Task>
    <button aria-label="Chrome" className="relative ml-[4px] flex h-[49px] w-12 items-center justify-center rounded border border-[#e4e4e4] bg-[#fafafa]">
      <svg viewBox="0 0 28 28" className="size-7">
        <circle cx="14" cy="14" r="14" fill="#fbc116" />
        <path d="M1.900 7A14 14 0 0 1 26.100 7H14a7 7 0 0 0-6.100 10.500z" fill="#e33b2e" />
        <path d="M1.900 7A14 14 0 0 0 14 28l6.100-10.500A7 7 0 0 1 7.900 17.500z" fill="#2a9a47" />
        <circle cx="14" cy="14" r="7" fill="#fff" />
        <circle cx="14" cy="14" r="5.300" fill="#3d7ded" />
      </svg>
      <span className="absolute bottom-0 h-1 w-5 rounded-full bg-[#0a74d1]" />
    </button>

    <div className="ml-auto flex items-center text-[15px] leading-5">
      <button aria-label="Ícones ocultos"><svg viewBox="0 0 16 10" className="h-[10px] w-4"><path d="M.7 9L8 1.500 15.300 9" fill="none" stroke="#222" strokeWidth="1.300" /></svg></button>
      <button aria-label="OneDrive" className="ml-3">
        <svg viewBox="0 0 20 14" className="h-[14px] w-5">
          <path d="M4.500 13a4 4 0 0 1-.7-7.800C5 2.500 7.300.8 10 .8c3 0 5 1.700 5.900 4.200A4 4 0 0 1 15.500 13z" fill="#bbb" stroke="#222" strokeWidth="1.200" />
          <path d="M4 5.300C5 2.500 7.300 1.300 10 1.300s4.500 1.200 5.500 4l-5 1.700z" fill="#888" />
        </svg>
      </button>
      <button className="ml-[15px] w-9 text-center">POR<br />PTB2</button>
      <button aria-label="Rede, som e bateria" className="ml-[20px] flex items-center gap-[10px]">
        <svg viewBox="0 0 20 15" className="h-[15px] w-5">
          <g fill="none" stroke="#222" strokeWidth="1.300"><path d="M.7 5.500a13 13 0 0 1 18.600 0M3.500 8.300a9 9 0 0 1 13 0M6.300 11a5.300 5.300 0 0 1 7.400 0" /></g>
          <circle cx="10" cy="13" r="1.700" fill="#222" />
        </svg>
        <svg viewBox="0 0 20 16" className="h-4 w-5">
          <g fill="none" stroke="#222" strokeWidth="1.300"><path d="M1 5.500h2.500L8 1.500v13L3.500 10.500H1zM11 5a4.500 4.500 0 0 1 0 6M13.500 3a7.500 7.500 0 0 1 0 10" /><path d="M16.500 1a10.500 10.500 0 0 1 0 14" stroke="#bbb" /></g>
        </svg>
        <svg viewBox="0 0 20 17" className="h-[17px] w-5">
          <path d="M.7 6V3a2 2 0 0 1 2-2h13a2 2 0 0 1 2 2v7a2 2 0 0 1-2 2H13" fill="none" stroke="#222" strokeWidth="1.400" />
          <path d="M18.500 5h1.500v4h-1.500z" fill="#222" />
          <circle cx="6" cy="11" r="5.700" fill="#1b1b1b" />
          <path d="M4 9l4 4M8 9l-4 4" stroke="#fff" strokeWidth="1.400" />
        </svg>
      </button>
      <button className="ml-[18px] text-right">00:43<br />20/05/2022</button>
      <button aria-label="Assistente de foco" className="ml-[10px]">
        <svg viewBox="0 0 18 18" className="size-[18px]"><path d="M8.500.8a8.300 8.300 0 1 1-7.300 13.400c4.500-.2 7.800-2.700 8.300-6.500.2-2.500 0-4.500-1-6.900z" fill="none" stroke="#222" strokeWidth="1.200" /></svg>
      </button>
    </div>
  </footer>
);

export default function App() {
  return (
    <div className="flex h-screen flex-col overflow-hidden bg-white">
      <TabStrip />
      <AddressBar />
      <div className="flex min-h-0 flex-1">
        <div className="flex min-w-0 flex-1 flex-col">
          <MenuBar />
          <div className={`flex min-h-0 flex-1 ${sheetFont}`}>
            <Canvas />
            <div className="w-[11px] bg-[#f9f9f9]">
              <div className="h-[39.5%] bg-[#ccc]" />
            </div>
          </div>
          <div className="h-[10px] shrink-0 bg-[#f9f9f9]">
            <div className="h-full w-[52.1%] border-t border-[#bbb] bg-[#ccc]" />
          </div>
        </div>
        <SidePanel />
      </div>
      <Taskbar />
    </div>
  );
}
